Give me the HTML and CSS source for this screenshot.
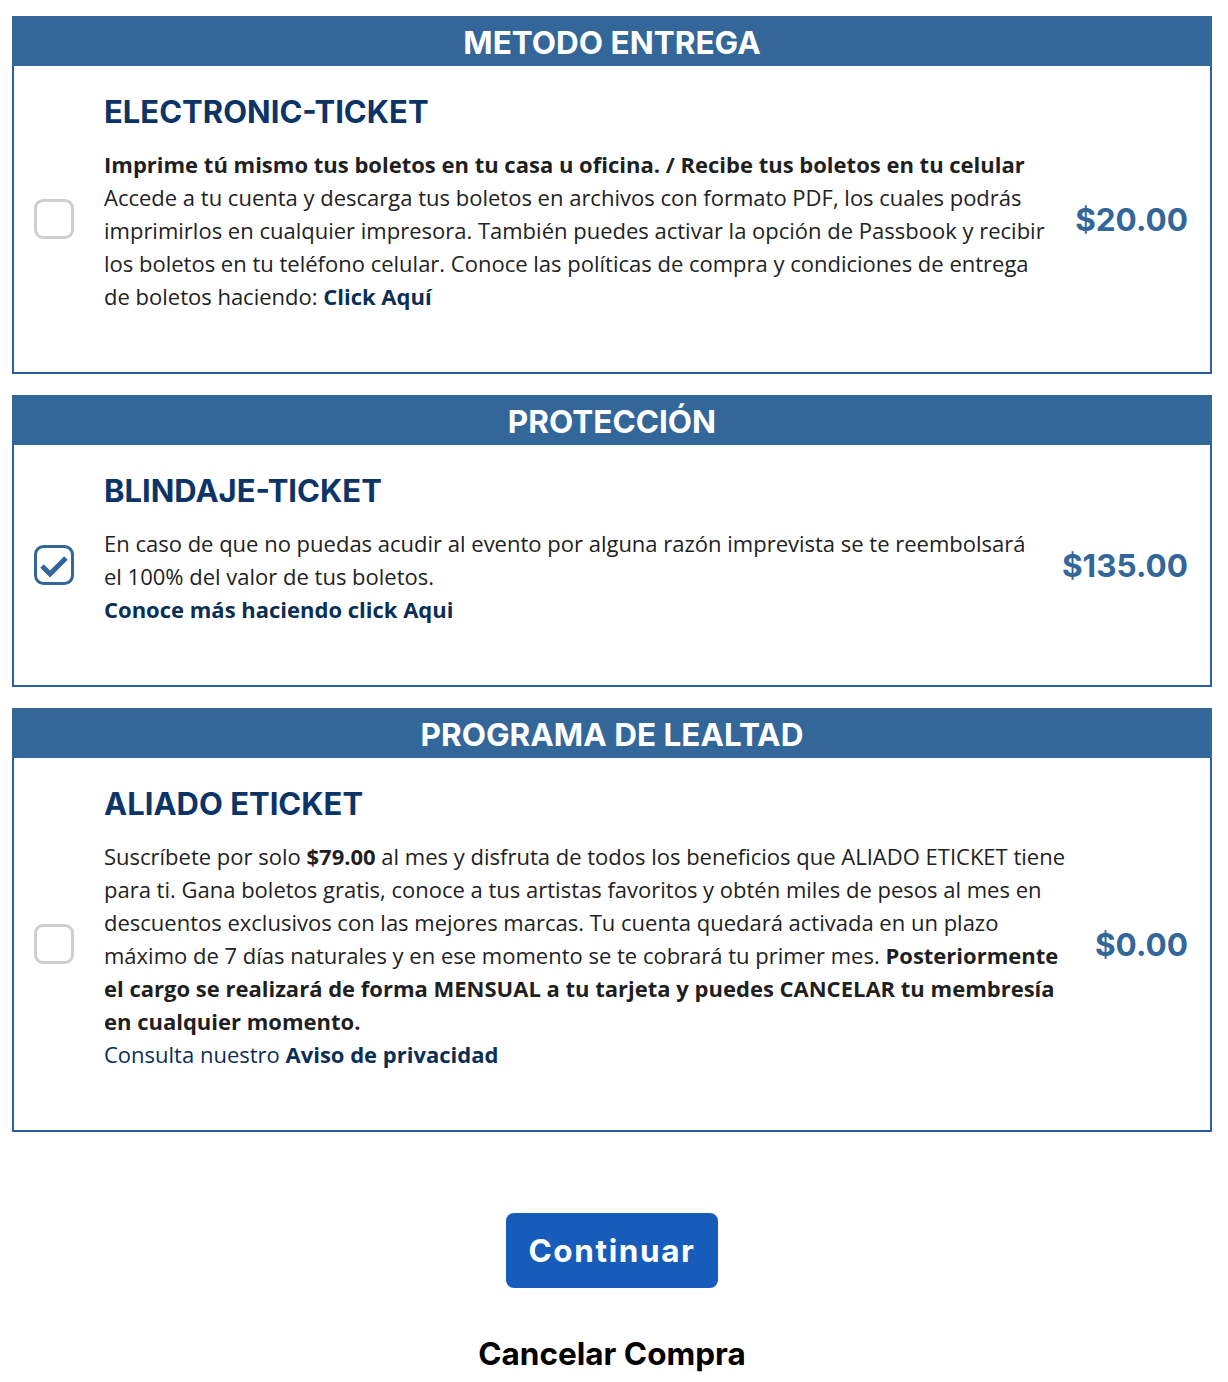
FILE: index.html
```html
<!DOCTYPE html>
<html lang="es">
<head>
<meta charset="utf-8">
<title>Método de entrega</title>
<link rel="stylesheet" href="styles.css">
</head>
<body>
<div class="page">
  <section class="card">
    <div class="card-head">METODO ENTREGA</div>
    <div class="card-body">
      <span class="check"></span>
      <div class="info">
        <h2 class="title">ELECTRONIC-TICKET</h2>
        <p class="text"><strong>Imprime tú mismo tus boletos en tu casa u oficina. / Recibe tus boletos en tu celular</strong><br>Accede a tu cuenta y descarga tus boletos en archivos con formato PDF, los cuales podrás imprimirlos en cualquier impresora. También puedes activar la opción de Passbook y recibir los boletos en tu teléfono celular. Conoce las políticas de compra y condiciones de entrega de boletos haciendo: <a class="link" href="#">Click Aquí</a></p>
      </div>
      <div class="price">$20.00</div>
    </div>
  </section>

  <section class="card">
    <div class="card-head">PROTECCIÓN</div>
    <div class="card-body">
      <span class="check checked">
        <svg viewBox="0 0 40 40" width="40" height="40"><rect x="1.5" y="1.5" width="37" height="37" rx="8" fill="none" stroke="#336699" stroke-width="3"/><path d="M8 21 L16 29 L32 13" fill="none" stroke="#336699" stroke-width="5" stroke-linejoin="miter"/></svg>
      </span>
      <div class="info">
        <h2 class="title">BLINDAJE-TICKET</h2>
        <p class="text">En caso de que no puedas acudir al evento por alguna razón imprevista se te reembolsará el 100% del valor de tus boletos.<br><a class="link" href="#">Conoce más haciendo click Aqui</a></p>
      </div>
      <div class="price">$135.00</div>
    </div>
  </section>

  <section class="card">
    <div class="card-head">PROGRAMA DE LEALTAD</div>
    <div class="card-body">
      <span class="check"></span>
      <div class="info">
        <h2 class="title">ALIADO ETICKET</h2>
        <p class="text">Suscríbete por solo <strong>$79.00</strong> al mes y disfruta de todos los beneficios que ALIADO ETICKET tiene para ti. Gana boletos gratis, conoce a tus artistas favoritos y obtén miles de pesos al mes en descuentos exclusivos con las mejores marcas. Tu cuenta quedará activada en un plazo máximo de 7 días naturales y en ese momento se te cobrará tu primer mes. <strong>Posteriormente el cargo se realizará de forma MENSUAL a tu tarjeta y puedes CANCELAR tu membresía en cualquier momento.</strong><br><span class="navy">Consulta nuestro <a class="link" href="#">Aviso de privacidad</a></span></p>
      </div>
      <div class="price">$0.00</div>
    </div>
  </section>

  <div class="actions">
    <button class="btn" type="button">Continuar</button>
    <a class="cancel" href="#">Cancelar Compra</a>
  </div>
</div>
</body>
</html>
```

FILE: styles.css
```css
* { box-sizing: border-box; }
html, body { margin: 0; padding: 0; background: #fff; }
.page {
  padding: 16px 16px 0 12px;
  font-family: "Open Sans", "DejaVu Sans", sans-serif;
}
.card {
  width: 1200px;
  border: 2px solid #2b5ea6;
  margin-bottom: 21px;
}
.card-head {
  height: 50px;
  margin: -2px -2px 0 -2px;
  background: #336699;
  color: #fff;
  font-family: Inter, "Liberation Sans", sans-serif;
  font-weight: 700;
  font-size: 31.5px;
  line-height: 53px;
  text-align: center;
}
.card-body {
  display: flex;
  align-items: center;
  padding: 0 22px 0 20px;
}
.check {
  flex: 0 0 40px;
  width: 40px;
  height: 40px;
  border: 3px solid #cfcfcf;
  border-radius: 9px;
  margin-right: 30px;
}
.check.checked { border: none; }
.check svg { display: block; }
.info {
  flex: 1 1 auto;
  min-width: 0;
  padding: 28px 0 59px;
}
.title {
  margin: 0 0 18px;
  font-family: Inter, "Liberation Sans", sans-serif;
  font-weight: 700;
  font-size: 31px;
  line-height: 36px;
  color: #0c3466;
}
.text {
  margin: 0;
  font-size: 22px;
  line-height: 33px;
  color: #222;
}
.text strong { font-weight: 700; color: #1f1f1f; }
.link {
  color: #0a2f55;
  font-weight: 700;
  text-decoration: none;
}
.navy { color: #0a2f55; }
.price {
  flex: 0 0 auto;
  margin-left: 26px;
  font-family: Inter, "Liberation Sans", sans-serif;
  font-weight: 700;
  font-size: 31.5px;
  color: #336699;
}
.actions {
  display: flex;
  flex-direction: column;
  align-items: center;
  width: 1200px;
  padding-top: 60px;
}
.btn {
  width: 212px;
  height: 75px;
  border: none;
  border-radius: 8px;
  background: #175cba;
  color: #fff;
  font-family: Inter, "Liberation Sans", sans-serif;
  font-weight: 700;
  font-size: 31.5px;
  letter-spacing: 1.6px;
  cursor: pointer;
}
.cancel {
  margin-top: 48px;
  font-family: Inter, "Liberation Sans", sans-serif;
  font-weight: 700;
  font-size: 31.5px;
  line-height: 36px;
  color: #000;
  text-decoration: none;
}
```
